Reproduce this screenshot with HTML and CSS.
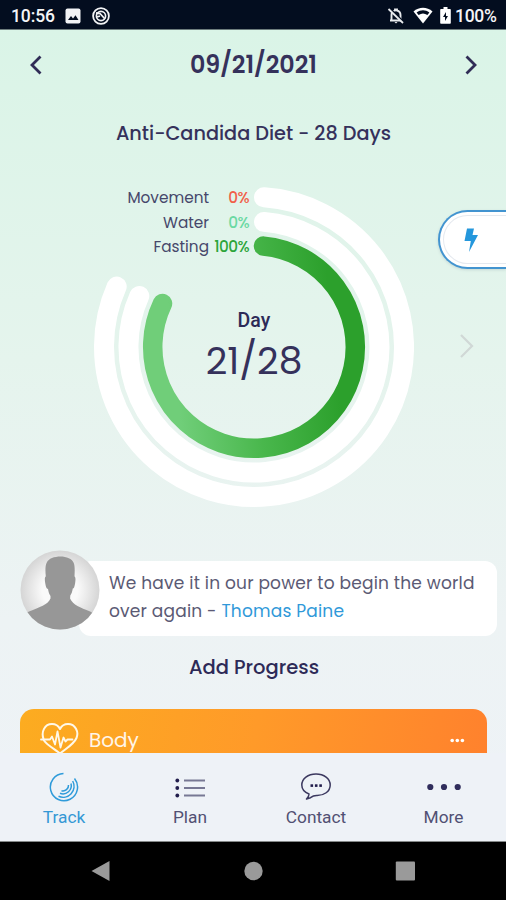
FILE: index.html
```html
<!DOCTYPE html>
<html lang="en">
<head>
<meta charset="utf-8">
<title>Track</title>
<link rel="stylesheet" href="styles.css">
</head>
<body>
<div class="phone">
  <header class="status">
    <span class="status-time">10:56</span>
    <svg class="status-photo" width="16" height="16" viewBox="0 0 16 16"><rect x=".5" y=".5" width="15" height="15" rx="2" fill="#f2f3f5"/><path d="M3 12l3-4 2 2.600 2.500-3.300L13.500 12z" fill="#030d1f"/></svg>
    <svg class="status-app" width="18" height="18" viewBox="0 0 18 18" fill="none" stroke="#f2f3f5"><circle cx="9" cy="9" r="7.900" stroke-width="1.800"/><circle cx="9" cy="9" r="4.600" stroke-width="1.700"/><path d="M4 6l4 .5 5 5.500M5 10l3-1" stroke-width="1.800"/></svg>
    <span class="spacer"></span>
    <svg class="status-bell" width="18" height="18" viewBox="0 0 18 18"><path d="M4.500 13V8c0-2.500 1.500-4 3.500-4.500V2.500h2v1c2 .5 3.500 2 3.500 4.500v5M3 13.500h12" fill="none" stroke="#e9ebee" stroke-width="1.900"/><path d="M7.500 15h3l-1.500 1.500z" fill="#e9ebee"/><path d="M3 1.500l13 13" stroke="#030d1f" stroke-width="2"/><path d="M1.500 2l14.500 14" stroke="#e9ebee" stroke-width="1.800"/></svg>
    <svg class="status-wifi" width="20" height="17" viewBox="0 0 20 17"><path d="M0.500 4.500C6-.5 14-.5 19.500 4.500L10 16.500z" fill="#fff"/><path d="M3.600 5.400c4-2.800 8.800-2.800 12.800 0l-2 2.600c-3-2-5.800-2-8.800 0z" fill="#030d1f"/></svg>
    <svg class="status-battery" width="11" height="17" viewBox="0 0 11 17"><path d="M3.500 0h4v2H10q.8 0 .8.800V16q0 .8-.8.800H1q-.8 0-.8-.800V2.800Q.2 2 1 2h2.500z" fill="#fff"/><path d="M6 5L3 10h2v4l3-5H6z" fill="#030d1f"/></svg>
    <span class="status-level">100%</span>
  </header>

  <main class="screen">
    <div class="date-row">
      <svg width="12" height="20" viewBox="0 0 12 20"><path d="M10.500 1.500L2 10l8.500 8.500" class="arrow"/></svg>
      <h1 class="date">09/21/2021</h1>
      <svg width="12" height="20" viewBox="0 0 12 20"><path d="M1.500 1.500L10 10l-8.500 8.500" class="arrow"/></svg>
    </div>
    <h2 class="program">Anti-Candida Diet - 28 Days</h2>

    <section class="progress">
      <svg class="rings" width="320" height="320" viewBox="-160 -160 320 320">
        <defs><linearGradient id="fasting" gradientUnits="userSpaceOnUse" x1="-80" y1="12" x2="80" y2="-4"><stop offset="0" stop-color="#70ce79"/><stop offset=".5" stop-color="#49b74c"/><stop offset="1" stop-color="#2ca02c"/></linearGradient></defs>
        <path class="ring" d="M10 -149.700A150 150 0 1 1 -137.300 -60.400"/>
        <path class="ring" d="M10 -125.100A125.500 125.500 0 1 1 -114.700 -51"/>
        <path class="ring ring-fasting" d="M9.500 -100.900A101.300 101.300 0 1 1 -91.500 -43.500"/>
      </svg>
      <dl class="legend">
        <dt>Movement</dt><dd class="red">0%</dd>
        <dt>Water</dt><dd class="mint">0%</dd>
        <dt>Fasting</dt><dd class="green">100%</dd>
      </dl>
      <div class="day"><span class="day-label">Day</span><span class="day-count">21/28</span></div>
      <svg class="next" width="15" height="26" viewBox="0 0 15 26"><path d="M2 2l11 11L2 24" fill="none" stroke="#d0d8d6" stroke-width="2.200"/></svg>
      <div class="quick"><div class="quick-inner"><svg width="14" height="24" viewBox="0 0 14 24"><path d="M3 .5h7L8.500 7H14L5 24l1.800-11H.5z" fill="#2497dc"/></svg></div></div>
    </section>

    <section class="quote">
      <svg class="avatar" width="80" height="80" viewBox="0 0 80 80">
        <defs><radialGradient id="portrait"><stop offset=".45" stop-color="#fafafa"/><stop offset="1" stop-color="#d5d5d5"/></radialGradient><clipPath id="face"><circle cx="40" cy="40" r="39.500"/></clipPath></defs>
        <circle cx="40" cy="40" r="39.500" fill="url(#portrait)"/>
        <path clip-path="url(#face)" fill="#979797" d="M40 6.500c7 0 12 2.500 13.500 6 1.500 3 1.300 8 1 14 1.200.5 1.200 3 .6 7-.6 3-1.100 5-2.300 5-.5 3-1.200 5-2.500 7l-.2 3c3 6.500 10 9 20 13l5 3v17H4V64.500l5-3c11-4.500 18.500-6.500 21.500-13V46c-1.300-2-2-4-2.500-7-1.500 0-2.300-3-2.800-6-.6-3.500-.5-6 .6-6.500-.6-6-.6-11 1-14 2-4 7-6 14.200-6z"/>
      </svg>
      <p class="quote-text"><span class="line">We have it in our power to begin the world</span><span class="line">over again - <a>Thomas Paine</a></span></p>
    </section>

    <h2 class="add">Add Progress</h2>

    <section class="card">
      <svg width="40" height="36" viewBox="0 0 40 36" fill="none" stroke="#fff8e8" stroke-linejoin="round" stroke-linecap="round"><path d="M3.500 17C1 10 4.500 2 12 2c4 0 6.500 2 8 5 1.500-3 4-5 8-5 7.500 0 11 8 8.500 14C34 22 27 26 20 31.500 13 26 7 23 4 18.500" stroke-width="2"/><path d="M1 17.500h9l2-3 3 8 2.500-13 3 16 3-10 2 4 2-2h5" stroke-width="1.800"/></svg>
      <span class="card-title">Body</span>
      <svg class="card-more" width="15" height="5" viewBox="0 0 15 5" fill="#fff"><circle cx="2.200" cy="2.500" r="1.800"/><circle cx="7.300" cy="2.500" r="1.800"/><circle cx="12.400" cy="2.500" r="1.800"/></svg>
    </section>
  </main>

  <nav class="tabs">
    <div class="tab active">
      <svg width="30" height="30" viewBox="0 0 30 30" fill="none" stroke="#2f9bda" stroke-width="1.500"><path d="M14.500 1.500A13.600 13.600 0 1 0 25.500 6.500"/><path d="M23.700 9A11 11 0 0 1 9.500 24.300"/><path d="M22 11.500A8.300 8.300 0 0 1 11 21.300"/><path d="M19.500 13A5.500 5.500 0 0 1 12.500 18.700"/></svg>
      <span>Track</span>
    </div>
    <div class="tab">
      <svg width="30" height="30" viewBox="0 0 30 30"><g fill="#211d4c"><circle cx="2.300" cy="8.500" r="1.900"/><circle cx="2.300" cy="16" r="1.900"/><circle cx="2.300" cy="23.500" r="1.900"/></g><path d="M9 8.500h21M9 16h21M9 23.500h21" stroke="#777894" stroke-width="2"/></svg>
      <span>Plan</span>
    </div>
    <div class="tab">
      <svg width="30" height="30" viewBox="0 0 30 30"><path d="M8 22C3 20 .8 17 .8 13 .8 6.500 7 2 15 2s14.200 4.500 14.200 11S23 23.700 15.500 23.500c-3 0-4.500 1-6 2.200L5.500 27c1.700-1.500 2.500-3 2.500-5z" fill="none" stroke="#3b385f" stroke-width="1.500" stroke-linejoin="round"/><g fill="#211d4c"><rect x="9.500" y="12.300" width="2.600" height="2.600"/><rect x="13.900" y="12.300" width="2.600" height="2.600"/><rect x="18.300" y="12.300" width="2.600" height="2.600"/></g></svg>
      <span>Contact</span>
    </div>
    <div class="tab">
      <svg width="34" height="30" viewBox="0 0 34 30" fill="#302d5c"><circle cx="3.300" cy="15" r="3.100"/><circle cx="17" cy="15" r="3.100"/><circle cx="30.700" cy="15" r="3.100"/></svg>
      <span>More</span>
    </div>
  </nav>

  <footer class="system">
    <svg width="20" height="22" viewBox="0 0 20 22"><path d="M.5 11L18.500 1v20z" fill="#9a9a9a"/></svg>
    <svg width="20" height="22" viewBox="0 0 20 22"><circle cx="10.500" cy="11" r="9.200" fill="#9a9a9a"/></svg>
    <svg width="20" height="22" viewBox="0 0 20 22"><rect x=".8" y="1.500" width="19.200" height="19" rx="1" fill="#9a9a9a"/></svg>
  </footer>
</div>
</body>
</html>
```
FILE: styles.css
```css
* { box-sizing: border-box; }
body { margin: 0; background: #000; color: #2d2a57; font-family: Poppins, Inter, sans-serif; }
h1, h2, p, dl, dd { margin: 0; }
svg { display: block; flex: none; }
.phone { width: 506px; height: 900px; display: flex; flex-direction: column; overflow: hidden; background: linear-gradient(#daf4e7 30px, #e5f4ed 360px, #edf3f4 620px, #eef2f7 842px); }

.status { height: 30px; flex: none; display: flex; align-items: center; padding: 2px 9px 0 11px; background: #030d1f; border-bottom: 1px solid #6d7c7c; color: #f4f5f7; font: 500 17.500px/26px Roboto, sans-serif; }
.status-time { width: 43px; letter-spacing: -.1px; }
.status-photo { margin-left: 11px; }
.status-app { margin-left: 11px; }
.spacer { flex: 1; }
.status-wifi { margin-left: 8px; }
.status-battery { margin-left: 7px; }
.status-level { width: 42px; margin-left: 4px; letter-spacing: -.3px; }

.screen { height: 723px; flex: none; overflow: hidden; display: flex; flex-direction: column; }
.date-row { height: 70px; flex: none; display: flex; align-items: center; justify-content: space-between; padding: 0 29px 0 30px; }
.arrow { fill: none; stroke: #302c56; stroke-width: 2.800; }
.date { font-size: 23.800px; line-height: 32px; font-weight: 600; white-space: nowrap; color: #35315b; }
.program { margin-top: 20px; padding: 1px 0 0 1px; font-size: 19.300px; line-height: 26px; height: 26px; font-weight: 500; text-align: center; white-space: nowrap; color: #35315b; }

.progress { position: relative; height: 383px; flex: none; padding: 40.500px 0 0 94px; }
.ring { fill: none; stroke: #fff; stroke-width: 20; stroke-linecap: round; }
.ring-fasting { stroke: url(#fasting); stroke-width: 19.500; }
.legend { position: absolute; top: 40px; left: 109px; display: grid; grid-template-columns: 100px 40px; line-height: 24.500px; font-size: 15.300px; text-align: right; }
.legend dt { color: #46476a; }
.legend dd { font-weight: 500; letter-spacing: -.6px; }
.red { color: #f1604a; }
.mint { color: #6bd9a3; }
.green { color: #2ca53a; }
.day { position: absolute; top: 161px; left: 94px; width: 320px; display: flex; flex-direction: column; align-items: center; }
.day-label { font: 500 19.500px/28px Roboto, sans-serif; letter-spacing: .1px; }
.day-count { margin-top: 3px; font-size: 37.500px; line-height: 46px; color: #35315b; }
.next { position: absolute; right: 32px; top: 187px; }
.quick { position: absolute; right: 0; top: 64px; width: 68px; height: 59px; padding: 3px 0 3px 3px; background: #fff; border: 2px solid #4294d0; border-right: 0; border-radius: 30px 0 0 30px; box-shadow: 0 1px 3px #c4d8d4; }
.quick-inner { height: 49px; padding: 12px 0 0 20px; border: 1px solid #e5e9ef; border-right: 0; border-radius: 25px 0 0 25px; }

.quote { height: 105px; flex: none; display: flex; padding: 21px 9px 0 20px; }
.avatar { position: relative; }
.quote-text { width: 418px; height: 75px; margin: 11px 0 0 -21px; padding: 8px 0 0 30px; border-radius: 12px; background: #fff; font-size: 17px; line-height: 28px; font-weight: 400; letter-spacing: .2px; color: #5b5a74; white-space: nowrap; }
.line { display: block; }
.quote-text a { color: #3099d9; }
.add { height: 28px; flex: none; margin-top: 20px; padding-left: 2px; font-size: 19.500px; line-height: 28px; font-weight: 500; text-align: center; }
.card { width: 467px; height: 74px; flex: none; display: flex; margin: 27px 0 0 20px; padding: 13px 22px 0 20px; border-radius: 14px 14px 0 0; background: linear-gradient(100deg, #fcac20, #ff9a29 50%, #ff812d); color: #fff5e8; }
.card-title { margin: 1px 0 0 9px; font-size: 20px; line-height: 34px; font-weight: 400; }
.card-more { margin: 16px 0 0 auto; }

.tabs { height: 89px; flex: none; display: grid; grid-template-columns: 128px 124px 128px 126px; padding-top: 19px; background: #eef2f7; border-bottom: 1px solid #858989; }
.tab { display: flex; flex-direction: column; align-items: center; color: #515073; font: 17.300px/24px Roboto, sans-serif; }
.tab span { margin-top: 3px; }
.tab:last-child { padding-left: 1px; }
.tab.active { color: #3598d5; }
.system { flex: 1; display: flex; justify-content: space-between; padding: 18px 91px 0; background: #000; }
```
